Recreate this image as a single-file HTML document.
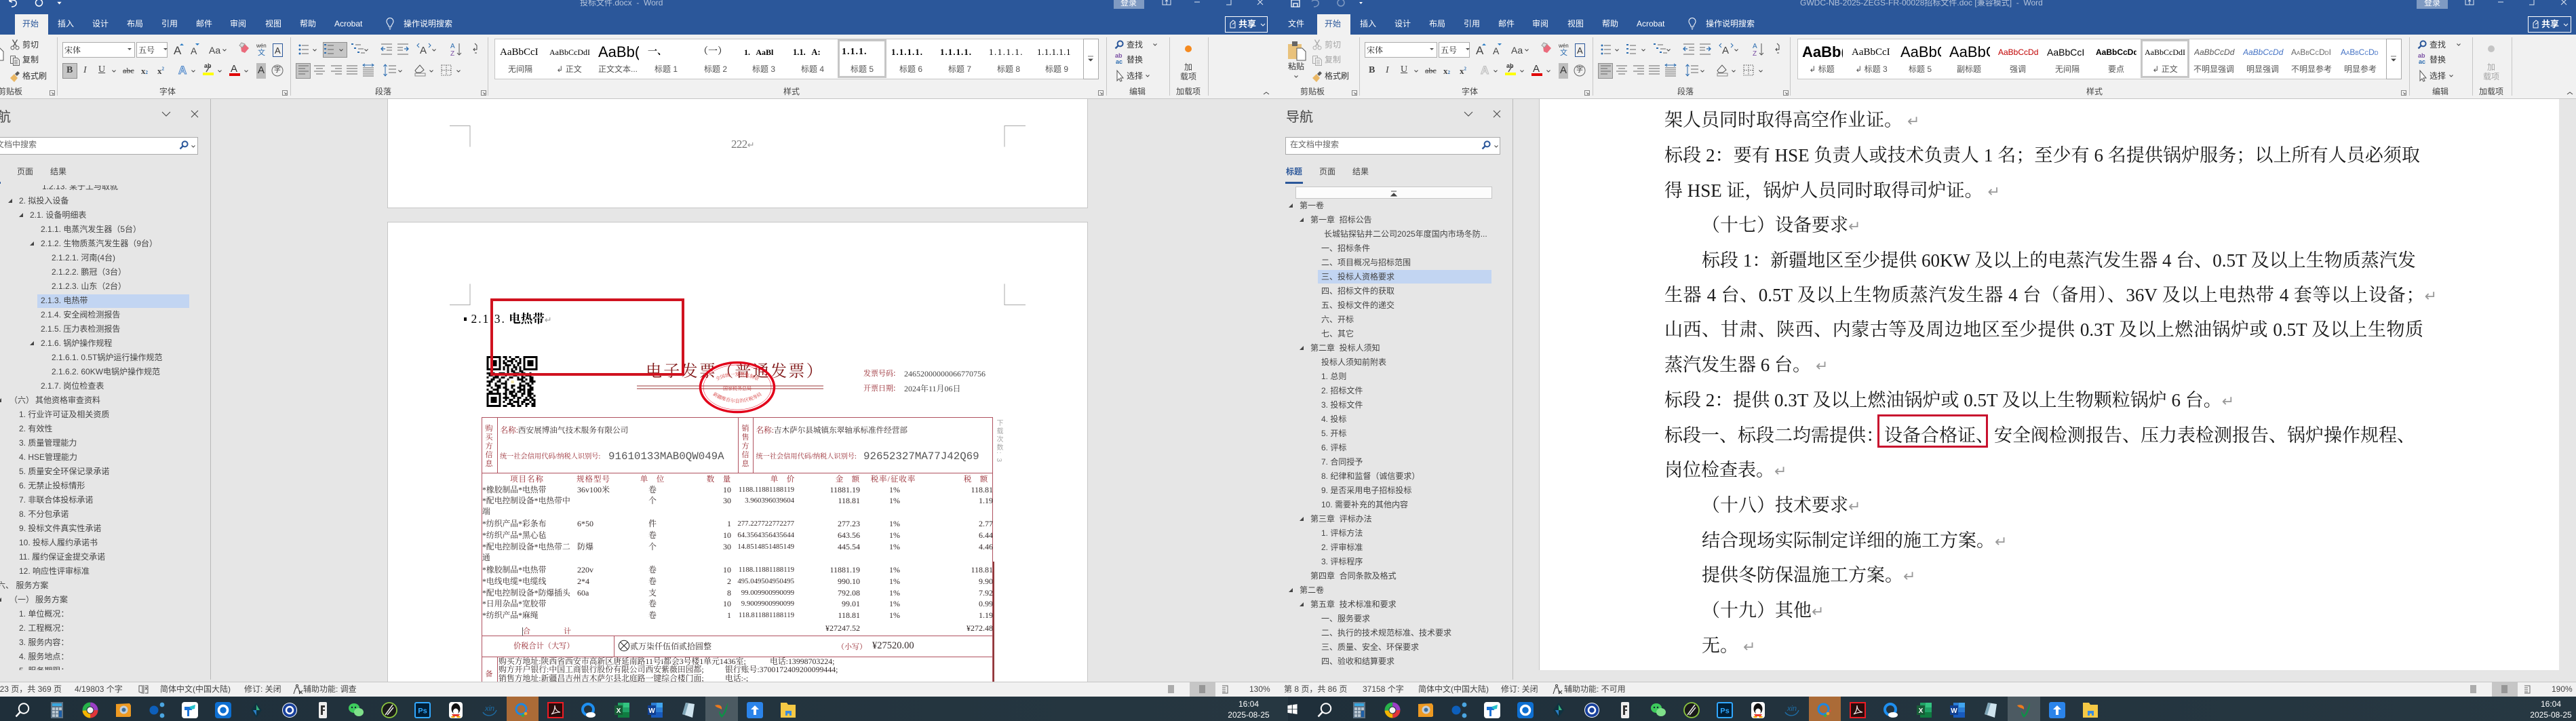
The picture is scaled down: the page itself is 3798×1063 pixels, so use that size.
<!DOCTYPE html>
<html lang="zh"><head><meta charset="utf-8"><title>Word</title>
<style>
html,body{margin:0;padding:0}
body{width:3798px;height:1063px;overflow:hidden;position:relative;background:#e6e6e6;font-family:"Liberation Sans","Noto Sans CJK SC",sans-serif;font-size:12px;color:#444}
.a{position:absolute;white-space:nowrap;line-height:1}
.b{position:absolute;box-sizing:border-box}
.s{font-family:"Liberation Serif","Noto Serif CJK SC",serif}
.r{transform:translateX(-100%)}
.c{transform:translateX(-50%)}
.w{color:#fff}
.g{color:#a5a5a5}
.tb{top:29px;color:#fff}
.hd{top:-2px;color:#b4c3da}
.lb{top:129px;color:#444}
.sep{position:absolute;top:55px;height:86px;width:1px;background:#c6c6c6}
.act{position:absolute;background:#c6c6c6;border:1px solid #8f8f8f;box-sizing:border-box}
.gal{position:absolute;top:57px;height:60px;background:#fff;border:1px solid #c6c6c6;box-sizing:border-box}
.gs{position:absolute;top:58px;width:72px;height:57px;border:3px solid #c6c6c6;box-sizing:border-box;background:#fff}
.gb{position:absolute;top:57px;height:60px;width:23px;background:#fff;border:1px solid #aaa;box-sizing:border-box}
.pv{position:absolute;top:64px;height:26px;width:60px;overflow:hidden;line-height:26px;white-space:nowrap;color:#000}
.sl{position:absolute;top:96px;transform:translateX(-50%);white-space:nowrap;line-height:1;color:#555}
.nl{position:absolute;top:273px;height:715px;overflow:hidden;width:300px}
.n2{top:293px;height:695px;width:300px}
.nr{position:relative;height:21px;line-height:21px;white-space:nowrap;color:#444}
.nr i{position:absolute;top:7px;width:0;height:0;border-left:6px solid transparent;border-bottom:6px solid #444}
.hl{position:absolute;height:20px;background:#c2d5f2}
.sb{position:absolute;top:1005px;height:22px;left:0;width:3798px;background:#f1f1f1;border-top:1px solid #c6c6c6;box-sizing:border-box}
.st{top:1010px;color:#444}
.tk{position:absolute;top:1027px;left:0;width:3798px;height:36px;background:linear-gradient(90deg,#1f2f3a,#263741 50%,#1f2f3a 50%,#273842)}
.page{position:absolute;background:#fff;border:1px solid #c6c6c6;box-sizing:border-box}
.rd{color:#96262e}
.ir{position:absolute;left:0;width:1464px;height:12px;color:#332a2a;font-family:"Liberation Serif","Noto Serif CJK SC",serif;font-size:12px}
.ir i{position:absolute;top:0;font-style:normal;white-space:nowrap;line-height:12px}
.nm{left:711px;font-size:11.8px}.sp{left:851px}.un{left:962px;transform:translateX(-50%);font-size:11.8px}.qt{right:386px}.pr{right:293px;font-size:10.8px}.am{right:196px}.ra{left:1319px;transform:translateX(-50%)}.tx{right:0}
.ih{position:absolute;top:702px;color:#96262e;font-size:11.5px;line-height:1;white-space:nowrap;transform:translateX(-50%);font-family:"Liberation Serif","Noto Serif CJK SC",serif;letter-spacing:1px}
.v{position:absolute;left:715.5px;font-size:11px;line-height:1;color:#96262e;font-family:"Noto Serif CJK SC",serif}
.v2{left:1093.5px}
.inv{font-family:"Liberation Serif","Noto Serif CJK SC",serif;color:#332a2a;font-size:11.85px}
.ln{position:absolute;font-family:"Liberation Serif","Noto Serif CJK SC",serif;font-size:27px;line-height:27px;height:27px;white-space:nowrap;color:#1a1a1a}
.j{text-align:justify;text-align-last:justify}
.ln em{font-style:normal;font-family:"DejaVu Sans",sans-serif;font-size:22px;color:#999}
</style></head><body>

<!-- top bars -->
<div class="b" style="left:0;top:0;width:3798px;height:51px;background:#2b579a"></div>
<div class="b" style="left:0;top:51px;width:3798px;height:95px;background:#f1f1f1;border-bottom:1px solid #c6c6c6"></div>

<!-- Title texts -->
<div class="a hd" style="left:855px">投标文件.docx&nbsp; -&nbsp; Word</div>
<div class="a hd" style="left:2654px">GWDC-NB-2025-ZEGS-FR-00028招标文件.doc [兼容模式]&nbsp; -&nbsp; Word</div>
<div class="b" style="left:1642px;top:0;width:45px;height:13px;background:#7f9ac2"></div>
<div class="b" style="left:3563px;top:0;width:46px;height:13px;background:#7f9ac2"></div>
<div class="a" style="left:1652px;top:-2px;color:#fff">登录</div>
<div class="a" style="left:3574px;top:-2px;color:#fff">登录</div>

<!-- Tabs window 1 -->
<div class="b" style="left:22px;top:21px;width:49px;height:30px;background:#f1f1f1"></div>
<div class="a" style="left:33px;top:29px;color:#2b579a">开始</div>
<div class="a tb" style="left:85px">插入</div><div class="a tb" style="left:136px">设计</div><div class="a tb" style="left:187px">布局</div><div class="a tb" style="left:238px">引用</div><div class="a tb" style="left:289px">邮件</div><div class="a tb" style="left:339px">审阅</div><div class="a tb" style="left:391px">视图</div><div class="a tb" style="left:442px">帮助</div><div class="a tb" style="left:493px">Acrobat</div><div class="a tb" style="left:595px">操作说明搜索</div>
<!-- Tabs window 2 -->
<div class="a tb" style="left:1899px">文件</div>
<div class="b" style="left:1942px;top:21px;width:49px;height:30px;background:#f1f1f1"></div>
<div class="a" style="left:1953px;top:29px;color:#2b579a">开始</div>
<div class="a tb" style="left:2005px">插入</div><div class="a tb" style="left:2056px">设计</div><div class="a tb" style="left:2107px">布局</div><div class="a tb" style="left:2158px">引用</div><div class="a tb" style="left:2209px">邮件</div><div class="a tb" style="left:2259px">审阅</div><div class="a tb" style="left:2311px">视图</div><div class="a tb" style="left:2362px">帮助</div><div class="a tb" style="left:2413px">Acrobat</div><div class="a tb" style="left:2515px">操作说明搜索</div>
<!-- Share -->
<div class="b" style="left:1806px;top:24px;width:63px;height:24px;border:1px solid #fff"></div>
<div class="a" style="left:1826px;top:29px;color:#fff;font-weight:700;font-size:13px">共享</div>
<div class="b" style="left:3727px;top:24px;width:64px;height:24px;border:1px solid #fff"></div>
<div class="a" style="left:3747px;top:29px;color:#fff;font-weight:700;font-size:13px">共享</div>

<!-- Separators -->
<div class="sep" style="left:84px"></div><div class="sep" style="left:428px"></div><div class="sep" style="left:719px"></div><div class="sep" style="left:1631px"></div><div class="sep" style="left:1724px"></div><div class="sep" style="left:1781px"></div>
<div class="sep" style="left:2004px"></div><div class="sep" style="left:2348px"></div><div class="sep" style="left:2639px"></div><div class="sep" style="left:3552px"></div><div class="sep" style="left:3645px"></div><div class="sep" style="left:3703px"></div>

<!-- Clipboard text -->
<div class="a" style="left:33px;top:60px;color:#333">剪切</div><div class="a" style="left:33px;top:82px;color:#333">复制</div><div class="a" style="left:33px;top:106px;color:#333">格式刷</div>
<div class="a lb" style="left:-3px">剪贴板</div>
<div class="a g" style="left:1953px;top:60px">剪切</div><div class="a g" style="left:1953px;top:82px">复制</div><div class="a" style="left:1953px;top:106px;color:#333">格式刷</div>
<div class="a" style="left:1899px;top:92px;color:#333">粘贴</div>
<div class="a lb" style="left:1917px">剪贴板</div>

<!-- Font group w1 -->
<div class="b" style="left:92px;top:62px;width:107px;height:23px;background:#fff;border:1px solid #ababab"></div>
<div class="a" style="left:95px;top:68px;color:#222;font-family:'Noto Serif CJK SC',serif">宋体</div>
<div class="b" style="left:201px;top:62px;width:46px;height:23px;background:#fff;border:1px solid #ababab"></div>
<div class="a" style="left:204px;top:68px;color:#222;font-family:'Noto Serif CJK SC',serif">五号</div>
<div class="a lb" style="left:235px">字体</div>
<div class="a" style="left:256px;top:66px;font-size:17px;color:#444">A</div>
<div class="a" style="left:281px;top:68px;font-size:14px;color:#444">A</div>
<div class="a" style="left:308px;top:67px;font-size:14px;color:#444">Aa</div>
<div class="a" style="left:378px;top:64px;font-size:8px;color:#333">wén</div>
<div class="a" style="left:380px;top:73px;font-size:11px;color:#2b6cb0">文</div>
<div class="b" style="left:402px;top:64px;width:15px;height:20px;border:1px solid #2b579a"></div>
<div class="a" style="left:405px;top:68px;font-size:13px;color:#333">A</div>
<div class="act" style="left:92px;top:93px;width:22px;height:23px"></div>
<div class="a s" style="left:98px;top:97px;font-size:14px;font-weight:700;color:#444">B</div>
<div class="a s" style="left:123px;top:97px;font-size:14px;font-style:italic;color:#444">I</div>
<div class="a s" style="left:145px;top:96px;font-size:14px;text-decoration:underline;color:#444">U</div>
<div class="a s" style="left:181px;top:98px;font-size:12px;text-decoration:line-through;color:#444">abc</div>
<div class="a s" style="left:208px;top:98px;font-size:13px;font-weight:700;color:#444">x<span style="font-size:7px;color:#2b6cb0">2</span></div>
<div class="a s" style="left:232px;top:98px;font-size:13px;font-weight:700;color:#444">x<sup style="font-size:7px;color:#2b6cb0;line-height:0">2</sup></div>
<div class="a" style="left:263px;top:95px;font-size:17px;color:#dbe7f6;-webkit-text-stroke:1px #4f86c6;font-weight:700">A</div>
<div class="a" style="left:301px;top:93px;font-size:9px;color:#333;font-weight:700">ab</div>
<div class="a" style="left:340px;top:94px;font-size:15px;color:#333">A</div>
<div class="b" style="left:378px;top:93px;width:14px;height:23px;background:#bdbdbd"></div>
<div class="a" style="left:380px;top:96px;font-size:15px;color:#333">A</div>
<div class="a" style="left:404px;top:99px;font-size:10px;color:#333">字</div>
<!-- Font group w2 -->
<div class="b" style="left:2012px;top:62px;width:107px;height:23px;background:#fff;border:1px solid #ababab"></div>
<div class="a" style="left:2015px;top:68px;color:#222;font-family:'Noto Serif CJK SC',serif">宋体</div>
<div class="b" style="left:2121px;top:62px;width:46px;height:23px;background:#fff;border:1px solid #ababab"></div>
<div class="a" style="left:2124px;top:68px;color:#222;font-family:'Noto Serif CJK SC',serif">五号</div>
<div class="a lb" style="left:2155px">字体</div>
<div class="a" style="left:2176px;top:66px;font-size:17px;color:#444">A</div>
<div class="a" style="left:2201px;top:68px;font-size:14px;color:#444">A</div>
<div class="a" style="left:2228px;top:67px;font-size:14px;color:#444">Aa</div>
<div class="a" style="left:2298px;top:64px;font-size:8px;color:#333">wén</div>
<div class="a" style="left:2300px;top:73px;font-size:11px;color:#2b6cb0">文</div>
<div class="b" style="left:2322px;top:64px;width:15px;height:20px;border:1px solid #2b579a"></div>
<div class="a" style="left:2325px;top:68px;font-size:13px;color:#333">A</div>
<div class="a s" style="left:2018px;top:97px;font-size:14px;font-weight:700;color:#444">B</div>
<div class="a s" style="left:2043px;top:97px;font-size:14px;font-style:italic;color:#444">I</div>
<div class="a s" style="left:2065px;top:96px;font-size:14px;text-decoration:underline;color:#444">U</div>
<div class="a s" style="left:2101px;top:98px;font-size:12px;text-decoration:line-through;color:#444">abc</div>
<div class="a s" style="left:2128px;top:98px;font-size:13px;font-weight:700;color:#444">x<span style="font-size:7px;color:#2b6cb0">2</span></div>
<div class="a s" style="left:2152px;top:98px;font-size:13px;font-weight:700;color:#444">x<sup style="font-size:7px;color:#2b6cb0;line-height:0">2</sup></div>
<div class="a" style="left:2183px;top:95px;font-size:17px;color:#eee;-webkit-text-stroke:1px #bbb;font-weight:700">A</div>
<div class="a" style="left:2221px;top:93px;font-size:9px;color:#333;font-weight:700">ab</div>
<div class="a" style="left:2260px;top:94px;font-size:15px;color:#333">A</div>
<div class="b" style="left:2298px;top:93px;width:14px;height:23px;background:#bdbdbd"></div>
<div class="a" style="left:2300px;top:96px;font-size:15px;color:#333">A</div>
<div class="a" style="left:2324px;top:99px;font-size:10px;color:#333">字</div>

<!-- Paragraph -->
<div class="act" style="left:476px;top:62px;width:36px;height:23px"></div>
<div class="act" style="left:436px;top:93px;width:22px;height:23px"></div>
<div class="act" style="left:2356px;top:93px;width:22px;height:23px"></div>
<div class="a" style="left:619px;top:67px;font-size:15px;color:#444">A</div>
<div class="a" style="left:2539px;top:67px;font-size:15px;color:#444">A</div>
<div class="a" style="left:664px;top:64px;font-size:10px;color:#2b6cb0">A</div>
<div class="a" style="left:664px;top:75px;font-size:10px;color:#7a4ea3">Z</div>
<div class="a" style="left:2584px;top:64px;font-size:10px;color:#2b6cb0">A</div>
<div class="a" style="left:2584px;top:75px;font-size:10px;color:#7a4ea3">Z</div>
<div class="a lb" style="left:553px">段落</div>
<div class="a lb" style="left:2473px">段落</div>

<!-- Styles gallery w1 -->
<div class="gal" style="left:729px;width:869px"></div>
<div class="gs" style="left:1235px"></div>
<div class="gb" style="left:1597px"></div>
<div class="pv s" style="left:737px;font-size:15px">AaBbCcI</div>
<div class="pv s" style="left:810px;font-size:12px">AaBbCcDdI</div>
<div class="pv" style="left:882px;font-size:22px">AaBb(</div>
<div class="pv s" style="left:955px;font-size:14px;font-weight:700">一、</div>
<div class="pv s" style="left:1030px;font-size:14px">（一）</div>
<div class="pv s" style="left:1097px;font-size:12px;font-weight:700">1.&nbsp;&nbsp; AaBl</div>
<div class="pv s" style="left:1169px;font-size:12.5px;font-weight:700">1.1.&nbsp;&nbsp; A:</div>
<div class="pv s" style="left:1241px;font-size:14px;font-weight:700;letter-spacing:1px">1.1.1.</div>
<div class="pv s" style="left:1314px;font-size:13px;font-weight:700;letter-spacing:1px">1.1.1.1.</div>
<div class="pv s" style="left:1386px;font-size:13px;font-weight:700;letter-spacing:1px">1.1.1.1.</div>
<div class="pv s" style="left:1458px;font-size:13px;letter-spacing:1.5px">1.1.1.1.</div>
<div class="pv s" style="left:1529px;font-size:13px;letter-spacing:.5px">1.1.1.1.1</div>
<div class="sl" style="left:767px">无间隔</div><div class="sl" style="left:839px">↲ 正文</div><div class="sl" style="left:911px">正文文本...</div><div class="sl" style="left:982px">标题 1</div><div class="sl" style="left:1055px">标题 2</div><div class="sl" style="left:1126px">标题 3</div><div class="sl" style="left:1198px">标题 4</div><div class="sl" style="left:1271px">标题 5</div><div class="sl" style="left:1343px">标题 6</div><div class="sl" style="left:1415px">标题 7</div><div class="sl" style="left:1487px">标题 8</div><div class="sl" style="left:1558px">标题 9</div>
<div class="a lb" style="left:1155px">样式</div>
<!-- Styles gallery w2 -->
<div class="gal" style="left:2650px;width:869px"></div>
<div class="gs" style="left:3156px"></div>
<div class="gb" style="left:3518px"></div>
<div class="pv" style="left:2657px;font-size:22px;font-weight:700">AaBb(</div>
<div class="pv s" style="left:2730px;font-size:15px">AaBbCcI</div>
<div class="pv" style="left:2802px;font-size:22px">AaBbCc</div>
<div class="pv" style="left:2874px;font-size:22px">AaBbC</div>
<div class="pv" style="left:2946px;font-size:12px;color:#c00000">AaBbCcDd</div>
<div class="pv" style="left:3018px;font-size:14px">AaBbCcI</div>
<div class="pv" style="left:3090px;font-size:12px;font-weight:700">AaBbCcDd</div>
<div class="pv s" style="left:3162px;font-size:12px">AaBbCcDdI</div>
<div class="pv" style="left:3235px;font-size:12px;font-style:italic;color:#555">AaBbCcDd</div>
<div class="pv" style="left:3307px;font-size:12px;font-style:italic;color:#4472c4">AaBbCcDd</div>
<div class="pv" style="left:3378px;font-size:12px;font-variant:small-caps;color:#666">AaBbCcDdI</div>
<div class="pv" style="left:3451px;font-size:12px;font-variant:small-caps;color:#4472c4">AaBbCcDd</div>
<div class="sl" style="left:2686px">↲ 标题</div><div class="sl" style="left:2759px">↲ 标题 3</div><div class="sl" style="left:2831px">标题 5</div><div class="sl" style="left:2903px">副标题</div><div class="sl" style="left:2975px">强调</div><div class="sl" style="left:3048px">无间隔</div><div class="sl" style="left:3120px">要点</div><div class="sl" style="left:3192px">↲ 正文</div><div class="sl" style="left:3264px">不明显强调</div><div class="sl" style="left:3336px">明显强调</div><div class="sl" style="left:3408px">不明显参考</div><div class="sl" style="left:3480px">明显参考</div>
<div class="a lb" style="left:3076px">样式</div>

<!-- Edit & add-in -->
<div class="a" style="left:1661px;top:60px;color:#333">查找</div><div class="a" style="left:1661px;top:82px;color:#333">替换</div><div class="a" style="left:1661px;top:106px;color:#333">选择</div>
<div class="a" style="left:1644px;top:78px;font-size:9px;color:#7a4ea3;font-weight:700">ab</div><div class="a" style="left:1645px;top:87px;font-size:9px;color:#2b6cb0;font-weight:700">ac</div>
<div class="a lb" style="left:1665px">编辑</div>
<div class="a" style="left:1746px;top:93px;color:#444">加</div><div class="a" style="left:1740px;top:107px;color:#444">载项</div><div class="a lb" style="left:1734px">加载项</div>
<div class="a" style="left:3582px;top:60px;color:#333">查找</div><div class="a" style="left:3582px;top:82px;color:#333">替换</div><div class="a" style="left:3582px;top:106px;color:#333">选择</div>
<div class="a" style="left:3565px;top:78px;font-size:9px;color:#7a4ea3;font-weight:700">ab</div><div class="a" style="left:3566px;top:87px;font-size:9px;color:#2b6cb0;font-weight:700">ac</div>
<div class="a lb" style="left:3586px">编辑</div>
<div class="a g" style="left:3667px;top:93px">加</div><div class="a g" style="left:3661px;top:107px">载项</div><div class="a lb" style="left:3655px">加载项</div>

<!-- Dividers in doc -->
<div class="b" style="left:310px;top:146px;width:1px;height:856px;background:#b9b9b9"></div>
<div class="b" style="left:2230px;top:146px;width:1px;height:856px;background:#b9b9b9"></div>

<!-- Nav w1 -->
<div class="a" style="left:-24px;top:163px;font-size:20px;color:#444">导航</div>
<div class="b" style="left:-30px;top:202px;width:322px;height:26px;background:#fff;border:1px solid #aaa"></div>
<div class="a" style="left:-18px;top:207px;color:#666">在文档中搜索</div>
<div class="a" style="left:25px;top:247px;color:#444">页面</div><div class="a" style="left:74px;top:247px;color:#444">结果</div>
<div class="b" style="left:0;top:268px;width:1px;height:3px;background:#2b579a"></div>
<div class="hl" style="left:55px;top:434px;width:224px"></div>
<div class="nl" style="left:0"><div style="margin-top:-8px">
<div class="nr" style="padding-left:62px">1.2.13. 某于工与取就</div>
<div class="nr" style="padding-left:28px"><i style="left:12px"></i>2. 拟投入设备</div>
<div class="nr" style="padding-left:44px"><i style="left:28px"></i>2.1. 设备明细表</div>
<div class="nr" style="padding-left:60px">2.1.1. 电蒸汽发生器（5台）</div>
<div class="nr" style="padding-left:60px"><i style="left:44px"></i>2.1.2. 生物质蒸汽发生器（9台）</div>
<div class="nr" style="padding-left:76px">2.1.2.1. 河南(4台)</div>
<div class="nr" style="padding-left:76px">2.1.2.2. 鹏冠（3台）</div>
<div class="nr" style="padding-left:76px">2.1.2.3. 山东（2台）</div>
<div class="nr" style="padding-left:60px">2.1.3. 电热带</div>
<div class="nr" style="padding-left:60px">2.1.4. 安全阀检测报告</div>
<div class="nr" style="padding-left:60px">2.1.5. 压力表检测报告</div>
<div class="nr" style="padding-left:60px"><i style="left:44px"></i>2.1.6. 锅炉操作规程</div>
<div class="nr" style="padding-left:76px">2.1.6.1. 0.5T锅炉运行操作规范</div>
<div class="nr" style="padding-left:76px">2.1.6.2. 60KW电锅炉操作规范</div>
<div class="nr" style="padding-left:60px">2.1.7. 岗位检查表</div>
<div class="nr" style="padding-left:14px"><i style="left:-4px"></i>（六）<span style="margin-left:2px">其他资格审查资料</span></div>
<div class="nr" style="padding-left:28px">1. 行业许可证及相关资质</div>
<div class="nr" style="padding-left:28px">2. 有效性</div>
<div class="nr" style="padding-left:28px">3. 质量管理能力</div>
<div class="nr" style="padding-left:28px">4. HSE管理能力</div>
<div class="nr" style="padding-left:28px">5. 质量安全环保记录承诺</div>
<div class="nr" style="padding-left:28px">6. 无禁止投标情形</div>
<div class="nr" style="padding-left:28px">7. 非联合体投标承诺</div>
<div class="nr" style="padding-left:28px">8. 不分包承诺</div>
<div class="nr" style="padding-left:28px">9. 投标文件真实性承诺</div>
<div class="nr" style="padding-left:28px">10. 投标人履约承诺书</div>
<div class="nr" style="padding-left:28px">11. 履约保证金提交承诺</div>
<div class="nr" style="padding-left:28px">12. 响应性评审标准</div>
<div class="nr" style="margin-left:-4px">六、&nbsp;服务方案</div>
<div class="nr" style="padding-left:14px"><i style="left:-4px"></i>（一）<span style="margin-left:2px">服务方案</span></div>
<div class="nr" style="padding-left:28px">1. 单位概况：</div>
<div class="nr" style="padding-left:28px">2. 工程概况：</div>
<div class="nr" style="padding-left:28px">3. 服务内容：</div>
<div class="nr" style="padding-left:28px">4. 服务地点：</div>
<div class="nr" style="padding-left:28px">5. 服务期限：</div>
</div></div>

<!-- Nav w2 -->
<div class="a" style="left:1896px;top:163px;font-size:20px;color:#444">导航</div>
<div class="b" style="left:1895px;top:202px;width:317px;height:26px;background:#fff;border:1px solid #aaa"></div>
<div class="a" style="left:1902px;top:207px;color:#666">在文档中搜索</div>
<div class="a" style="left:1896px;top:247px;color:#2b579a;font-weight:700">标题</div><div class="a" style="left:1945px;top:247px;color:#444">页面</div><div class="a" style="left:1994px;top:247px;color:#444">结果</div>
<div class="b" style="left:1895px;top:268px;width:26px;height:3px;background:#2b579a"></div>
<div class="b" style="left:1910px;top:275px;width:290px;height:18px;background:#fcfcfc;border:1px solid #c6c6c6"></div>
<div class="hl" style="left:1943px;top:398px;width:256px"></div>
<div class="nl n2" style="left:1900px"><div style="margin-top:-0.5px">
<div class="nr" style="padding-left:16px"><i style="left:0"></i>第一卷</div>
<div class="nr" style="padding-left:32px"><i style="left:16px"></i>第一章&nbsp;&nbsp;招标公告</div>
<div class="nr" style="padding-left:52px">长城钻探钻井二公司2025年度国内市场冬防...</div>
<div class="nr" style="padding-left:48px">一、招标条件</div>
<div class="nr" style="padding-left:48px">二、项目概况与招标范围</div>
<div class="nr" style="padding-left:48px">三、投标人资格要求</div>
<div class="nr" style="padding-left:48px">四、招标文件的获取</div>
<div class="nr" style="padding-left:48px">五、投标文件的递交</div>
<div class="nr" style="padding-left:48px">六、开标</div>
<div class="nr" style="padding-left:48px">七、其它</div>
<div class="nr" style="padding-left:32px"><i style="left:16px"></i>第二章&nbsp;&nbsp;投标人须知</div>
<div class="nr" style="padding-left:48px">投标人须知前附表</div>
<div class="nr" style="padding-left:48px">1. 总则</div>
<div class="nr" style="padding-left:48px">2. 招标文件</div>
<div class="nr" style="padding-left:48px">3. 投标文件</div>
<div class="nr" style="padding-left:48px">4. 投标</div>
<div class="nr" style="padding-left:48px">5. 开标</div>
<div class="nr" style="padding-left:48px">6. 评标</div>
<div class="nr" style="padding-left:48px">7. 合同授予</div>
<div class="nr" style="padding-left:48px">8. 纪律和监督（诚信要求）</div>
<div class="nr" style="padding-left:48px">9. 是否采用电子招标投标</div>
<div class="nr" style="padding-left:48px">10. 需要补充的其他内容</div>
<div class="nr" style="padding-left:32px"><i style="left:16px"></i>第三章&nbsp;&nbsp;评标办法</div>
<div class="nr" style="padding-left:48px">1. 评标方法</div>
<div class="nr" style="padding-left:48px">2. 评审标准</div>
<div class="nr" style="padding-left:48px">3. 评标程序</div>
<div class="nr" style="padding-left:32px">第四章&nbsp;&nbsp;合同条款及格式</div>
<div class="nr" style="padding-left:16px"><i style="left:0"></i>第二卷</div>
<div class="nr" style="padding-left:32px"><i style="left:16px"></i>第五章&nbsp;&nbsp;技术标准和要求</div>
<div class="nr" style="padding-left:48px">一、服务要求</div>
<div class="nr" style="padding-left:48px">二、执行的技术规范标准、技术要求</div>
<div class="nr" style="padding-left:48px">三、质量、安全、环保要求</div>
<div class="nr" style="padding-left:48px">四、验收和结算要求</div>
</div></div>

<!-- Left document pages -->
<div class="page" style="left:571px;top:146px;width:1033px;height:161px;border-top:0"></div>
<div class="page" style="left:571px;top:327px;width:1033px;height:680px"></div>
<div class="a s" style="left:1078px;top:204px;font-size:17px;color:#777;letter-spacing:-.6px">222<span style="font-family:'DejaVu Sans';font-size:13px;color:#999;letter-spacing:0">↵</span></div>

<!-- Heading + invoice -->
<div class="b" style="left:684px;top:468px;width:4px;height:5px;background:#000"></div>
<div class="a" style="left:694.5px;top:462px;font-size:17.5px;font-weight:700;color:#000;font-family:'Liberation Serif','Noto Serif CJK SC',serif"><span style="letter-spacing:2px;font-weight:400">2.1.3.</span> 电热带<span style="font-family:'DejaVu Sans';font-size:13px;color:#999;font-weight:400">↵</span></div>

<div class="a" style="left:952px;top:533px;font-size:24px;letter-spacing:2.3px;color:#7f1616;font-family:'Noto Serif CJK SC',serif">电子发票（普通发票）</div>
<div class="a rd" style="left:1273px;top:545px;font-size:11px;font-family:'Noto Serif CJK SC',serif">发票号码:</div>
<div class="a s" style="left:1333px;top:545px;font-size:12px;color:#444">24652000000066770756</div>
<div class="a rd" style="left:1273px;top:567px;font-size:11px;font-family:'Noto Serif CJK SC',serif">开票日期:</div>
<div class="a s" style="left:1333px;top:567px;font-size:12px;color:#444">2024年11月06日</div>

<div class="b" style="left:710px;top:615px;width:754px;height:392px;border:1px solid #b0525f;border-bottom:0"></div>
<div class="b" style="left:710px;top:697px;width:754px;height:1px;background:#b0525f"></div>
<div class="b" style="left:710px;top:937px;width:754px;height:1px;background:#b0525f"></div>
<div class="b" style="left:710px;top:968px;width:754px;height:1px;background:#b0525f"></div>
<div class="b" style="left:733px;top:615px;width:1px;height:82px;background:#b0525f"></div>
<div class="b" style="left:1088px;top:615px;width:1px;height:82px;background:#b0525f"></div>
<div class="b" style="left:1110px;top:615px;width:1px;height:82px;background:#b0525f"></div>
<div class="b" style="left:905px;top:937px;width:1px;height:31px;background:#b0525f"></div>
<div class="b" style="left:733px;top:968px;width:1px;height:37px;background:#b0525f"></div>
<div class="b" style="left:1464px;top:828px;width:2px;height:177px;background:#8f3a3a"></div>
<div class="b" style="left:770px;top:925px;width:1px;height:12px;background:#555"></div>

<div class="v" style="top:626px">购</div><div class="v" style="top:639px">买</div><div class="v" style="top:652px">方</div><div class="v" style="top:665px">信</div><div class="v" style="top:678px">息</div>
<div class="v v2" style="top:626px">销</div><div class="v v2" style="top:639px">售</div><div class="v v2" style="top:652px">方</div><div class="v v2" style="top:665px">信</div><div class="v v2" style="top:678px">息</div>

<div class="a" style="left:737.5px;top:629px;font-size:11.6px;font-family:'Liberation Serif','Noto Serif CJK SC',serif;color:#332a2a"><span class="rd">名称:</span>西安展博油气技术服务有限公司</div>
<div class="a" style="left:1114.5px;top:629px;font-size:11.6px;font-family:'Liberation Serif','Noto Serif CJK SC',serif;color:#332a2a"><span class="rd">名称:</span>吉木萨尔县城镇东翠轴承标准件经营部</div>
<div class="a rd" style="left:737px;top:669px;font-size:10.2px;font-family:'Liberation Serif','Noto Serif CJK SC',serif">统一社会信用代码/纳税人识别号:</div>
<div class="a rd" style="left:1114.5px;top:669px;font-size:10.2px;font-family:'Liberation Serif','Noto Serif CJK SC',serif">统一社会信用代码/纳税人识别号:</div>
<div class="a" style="left:897px;top:666px;font-size:15.8px;font-family:'Liberation Mono',monospace;color:#555">91610133MAB0QW049A</div>
<div class="a" style="left:1273px;top:666px;font-size:15.8px;font-family:'Liberation Mono',monospace;color:#555">92652327MA77J42Q69</div>

<div class="ih" style="left:777px">项目名称</div><div class="ih" style="left:875px">规格型号</div><div class="ih" style="left:962px">单&nbsp;&nbsp;&nbsp;位</div><div class="ih" style="left:1060px">数&nbsp;&nbsp;&nbsp;量</div><div class="ih" style="left:1154px">单&nbsp;&nbsp;&nbsp;价</div><div class="ih" style="left:1250px">金&nbsp;&nbsp;&nbsp;额</div><div class="ih" style="left:1317px">税率/征收率</div><div class="ih" style="left:1439px">税&nbsp;&nbsp;&nbsp;额</div>

<div class="ir" style="top:716px"><i class="nm">*橡胶制品*电热带</i><i class="sp">36v100米</i><i class="un">卷</i><i class="qt">10</i><i class="pr">1188.11881188119</i><i class="am">11881.19</i><i class="ra">1%</i><i class="tx">118.81</i></div>
<div class="ir" style="top:732px"><i class="nm">*配电控制设备*电热带中</i><i class="un">个</i><i class="qt">30</i><i class="pr">3.960396039604</i><i class="am">118.81</i><i class="ra">1%</i><i class="tx">1.19</i></div>
<div class="ir" style="top:748px"><i class="nm">端</i></div>
<div class="ir" style="top:766px"><i class="nm">*纺织产品*彩条布</i><i class="sp">6*50</i><i class="un">件</i><i class="qt">1</i><i class="pr">277.227722772277</i><i class="am">277.23</i><i class="ra">1%</i><i class="tx">2.77</i></div>
<div class="ir" style="top:783px"><i class="nm">*纺织产品*黑心毡</i><i class="un">卷</i><i class="qt">10</i><i class="pr">64.3564356435644</i><i class="am">643.56</i><i class="ra">1%</i><i class="tx">6.44</i></div>
<div class="ir" style="top:800px"><i class="nm">*配电控制设备*电热带二</i><i class="sp">防爆</i><i class="un">个</i><i class="qt">30</i><i class="pr">14.8514851485149</i><i class="am">445.54</i><i class="ra">1%</i><i class="tx">4.46</i></div>
<div class="ir" style="top:816px"><i class="nm">通</i></div>
<div class="ir" style="top:834px"><i class="nm">*橡胶制品*电热带</i><i class="sp">220v</i><i class="un">卷</i><i class="qt">10</i><i class="pr">1188.11881188119</i><i class="am">11881.19</i><i class="ra">1%</i><i class="tx">118.81</i></div>
<div class="ir" style="top:851px"><i class="nm">*电线电缆*电缆线</i><i class="sp">2*4</i><i class="un">卷</i><i class="qt">2</i><i class="pr">495.049504950495</i><i class="am">990.10</i><i class="ra">1%</i><i class="tx">9.90</i></div>
<div class="ir" style="top:868px"><i class="nm">*配电控制设备*防爆插头</i><i class="sp">60a</i><i class="un">支</i><i class="qt">8</i><i class="pr">99.009900990099</i><i class="am">792.08</i><i class="ra">1%</i><i class="tx">7.92</i></div>
<div class="ir" style="top:884px"><i class="nm">*日用杂品*宽胶带</i><i class="un">卷</i><i class="qt">10</i><i class="pr">9.9009900990099</i><i class="am">99.01</i><i class="ra">1%</i><i class="tx">0.99</i></div>
<div class="ir" style="top:901px"><i class="nm">*纺织产品*麻绳</i><i class="un">卷</i><i class="qt">1</i><i class="pr">118.811881188119</i><i class="am">118.81</i><i class="ra">1%</i><i class="tx">1.19</i></div>
<div class="ir" style="top:920px"><i class="am">¥27247.52</i><i class="tx">¥272.48</i></div>
<div class="a rd" style="left:771px;top:925px;font-size:11px;font-family:'Noto Serif CJK SC',serif">合</div>
<div class="a rd" style="left:831px;top:925px;font-size:11px;font-family:'Noto Serif CJK SC',serif">计</div>
<div class="a rd" style="left:757px;top:947px;font-size:11.2px;font-family:'Noto Serif CJK SC',serif">价税合计（大写）</div>
<div class="a inv" style="left:929px;top:947px;font-size:12px">贰万柒仟伍佰贰拾圆整</div>
<div class="a rd" style="left:1234px;top:948px;font-size:11px;font-family:'Noto Serif CJK SC',serif">（小写）</div>
<div class="a s" style="left:1286px;top:945px;font-size:14.5px;color:#332a2a">¥27520.00</div>
<div class="v" style="top:988px">备</div>
<div class="a inv" style="left:735px;top:970px">购买方地址:陕西省西安市高新区唐延南路11号i都会3号楼1单元1436室;</div>
<div class="a inv" style="left:1135px;top:970px">电话:13998703224;</div>
<div class="a inv" style="left:735px;top:982px">购方开户银行:中国工商银行股份有限公司西安紫薇田园都;</div>
<div class="a inv" style="left:1069px;top:982px">银行账号:3700172409200099444;</div>
<div class="b" style="left:735px;top:994px;width:500px;height:11px;overflow:hidden"><div class="a inv" style="left:0;top:1px">销售方地址:新疆昌吉州吉木萨尔县北庭路一键综合楼门面;</div><div class="a inv" style="left:334px;top:1px">电话:-;</div></div>
<div class="a" style="left:1467px;top:618px;font-size:10px;color:#a8a8a8;writing-mode:vertical-rl;letter-spacing:2px">下载次数: 3</div>

<!-- Right document page -->
<div class="b" style="left:2269px;top:146px;width:1504px;height:842px;background:#fff;border-left:1px solid #c6c6c6"></div>
<div class="ln" style="left:2454px;top:164px">架人员同时取得高空作业证。<em>&nbsp;↵</em></div>
<div class="ln j" style="left:2454px;top:216px;width:1114px">标段 2：要有 HSE 负责人或技术负责人 1 名；至少有 6 名提供锅炉服务；以上所有人员必须取</div>
<div class="ln" style="left:2454px;top:268px">得 HSE 证，锅炉人员同时取得司炉证。<em>&nbsp;↵</em></div>
<div class="ln" style="left:2509px;top:319px">（十七）设备要求<em>↵</em></div>
<div class="ln j" style="left:2509px;top:371px;width:1052px">标段 1：新疆地区至少提供 60KW 及以上的电蒸汽发生器 4 台、0.5T 及以上生物质蒸汽发</div>
<div class="ln j" style="left:2454px;top:422px;width:1139px">生器 4 台、0.5T 及以上生物质蒸汽发生器 4 台（备用）、36V 及以上电热带 4 套等以上设备；<em>↵</em></div>
<div class="ln j" style="left:2454px;top:473px;width:1119px">山西、甘肃、陕西、内蒙古等及周边地区至少提供 0.3T 及以上燃油锅炉或 0.5T 及以上生物质</div>
<div class="ln" style="left:2454px;top:525px">蒸汽发生器 6 台。<em>&nbsp;↵</em></div>
<div class="ln" style="left:2454px;top:577px">标段 2：提供 0.3T 及以上燃油锅炉或 0.5T 及以上生物颗粒锅炉 6 台。<em>↵</em></div>
<div class="ln j" style="left:2454px;top:629px;width:1106px">标段一、标段二均需提供：设备合格证、安全阀检测报告、压力表检测报告、锅炉操作规程、</div>
<div class="ln" style="left:2454px;top:680px">岗位检查表。<em>↵</em></div>
<div class="ln" style="left:2509px;top:732px">（十八）技术要求<em>↵</em></div>
<div class="ln" style="left:2509px;top:784px">结合现场实际制定详细的施工方案。<em>↵</em></div>
<div class="ln" style="left:2509px;top:835px">提供冬防保温施工方案。<em>↵</em></div>
<div class="ln" style="left:2509px;top:887px">（十九）其他<em>↵</em></div>
<div class="ln" style="left:2509px;top:939px">无。<em>&nbsp;↵</em></div>
<div class="b" style="left:2768px;top:611px;width:163px;height:49px;border:3px solid #c8102e"></div>

<!-- Status bar -->
<div class="sb"></div>
<div class="a st r" style="left:91px">第 223 页，共 369 页</div>
<div class="a st" style="left:110px">4/19803 个字</div>
<div class="a st" style="left:236px">简体中文(中国大陆)</div>
<div class="a st" style="left:360px">修订: 关闭</div>
<div class="a st" style="left:447px">辅助功能: 调查</div>
<div class="b" style="left:1754px;top:1006px;width:38px;height:21px;background:#c6c6c6"></div>
<div class="a st" style="left:1842px">130%</div>
<div class="a st" style="left:1893px">第 8 页，共 86 页</div>
<div class="a st" style="left:2009px">37158 个字</div>
<div class="a st" style="left:2091px">简体中文(中国大陆)</div>
<div class="a st" style="left:2213px">修订: 关闭</div>
<div class="a st" style="left:2306px">辅助功能: 不可用</div>
<div class="b" style="left:3674px;top:1006px;width:38px;height:21px;background:#c6c6c6"></div>
<div class="a st" style="left:3762px">190%</div>

<!-- Taskbar -->
<div class="tk"></div>
<div class="b" style="left:747px;top:1027px;width:47px;height:36px;background:#ab6b37"></div>
<div class="b" style="left:1040px;top:1027px;width:48px;height:36px;background:#4c5a62"></div>
<div class="b" style="left:2667px;top:1027px;width:47px;height:36px;background:#ab6b37"></div>
<div class="b" style="left:2960px;top:1027px;width:48px;height:36px;background:#4c5a62"></div>
<div class="a c w" style="left:1841px;top:1032px">16:04</div>
<div class="a c w" style="left:1841px;top:1048px">2025-08-25</div>
<div class="a c w" style="left:3761px;top:1032px">16:04</div>
<div class="a c w" style="left:3761px;top:1048px">2025-08-25</div>

<!-- SVG overlay -->
<svg width="3798" height="1063" viewBox="0 0 3798 1063" style="position:absolute;left:0;top:0" xmlns="http://www.w3.org/2000/svg">
<defs>
<symbol id="dn" viewBox="0 0 6 4"><path d="M.5.5 3 3 5.5.5" fill="none" stroke="#444"/></symbol>
<symbol id="lc" viewBox="0 0 8 8"><path d="M.5 7.5v-7h7v7zM3 3l3 3M6 4v2H4" fill="none" stroke="#666" stroke-width=".8"/></symbol>
<symbol id="mg" viewBox="0 0 14 14"><circle cx="8.6" cy="5.4" r="4" fill="none" stroke="#2b579a" stroke-width="2"/><path d="M5.8 8.2 1.5 12.5" stroke="#2b579a" stroke-width="2.4"/></symbol>
<symbol id="bulb" viewBox="0 0 12 18"><path d="M4 13C4 10 1 9 1 5.5a5 5 0 0 1 10 0C11 9 8 10 8 13zM4.5 15h3M5 17h2" fill="none" stroke="#fff"/></symbol>
<symbol id="cut" viewBox="0 0 14 16"><circle cx="3.5" cy="12.5" r="2.5" fill="none" stroke="currentColor"/><circle cx="10.5" cy="12.5" r="2.5" fill="none" stroke="currentColor"/><path d="M4.5 10.500 10.500.5M9.500 10.500 3.500.5" fill="none" stroke="currentColor" stroke-width="1.3"/></symbol>
<symbol id="cpy" viewBox="0 0 14 16"><path d="M.5 1.500h7v3M.5 1.500v11h3.500M4.500 4.500h6l3 3v8h-9zM6 8h5M6 10.500h5M6 13h5" fill="none" stroke="currentColor"/></symbol>
<symbol id="brs" viewBox="0 0 16 18"><path d="M1 11l6-6 5 6-5 6z" fill="#eab764"/><path d="M8 5l4-4 3 3-4 4z" fill="#5a5a5a"/></symbol>
<symbol id="paste" viewBox="0 0 28 30"><rect x="1" y="5" width="20" height="22" fill="#e9c27c"/><rect x="7" y="1" width="8" height="7" fill="#666"/><path d="M14 11h8l5 5v13H14z" fill="#fff" stroke="#555"/></symbol>
<symbol id="win" viewBox="0 0 24 24"><path d="M2 4.500 11 3v8.500H2zM12.500 3 22 1.500v10h-9.500zM2 12.500h9V21l-9-1.500zM12.500 12.500H22v10L12.500 21z" fill="#fff"/></symbol>
<symbol id="srch" viewBox="0 0 24 24"><circle cx="14" cy="9.500" r="7.200" fill="none" stroke="#fff" stroke-width="2"/><path d="M9 14.500 2.500 21.500" stroke="#fff" stroke-width="2.400"/></symbol>
<symbol id="calc" viewBox="0 0 24 24"><rect x="3" y="0" width="18" height="24" fill="#5e7386"/><rect x="5" y="2" width="14" height="4" fill="#38a7e0"/><path d="M5 8h4v4H5zM10 8h4v4h-4zM15 8h4v4h-4zM5 13h4v4H5zM10 13h4v4h-4zM5 18h4v4H5zM10 18h4v4h-4z" fill="#b8c5d0"/><rect x="15" y="13" width="4" height="9" fill="#1d5fa8"/></symbol>
<symbol id="ring" viewBox="0 0 24 24"><circle cx="12" cy="12" r="8.500" fill="none" stroke="#e0353a" stroke-width="6" stroke-dasharray="13 41" /><circle cx="12" cy="12" r="8.500" fill="none" stroke="#f4b400" stroke-width="6" stroke-dasharray="13 41" stroke-dashoffset="-13"/><circle cx="12" cy="12" r="8.500" fill="none" stroke="#27b24a" stroke-width="6" stroke-dasharray="14 40" stroke-dashoffset="-26"/><circle cx="12" cy="12" r="8.500" fill="none" stroke="#9b3fc6" stroke-width="6" stroke-dasharray="14 40" stroke-dashoffset="-40"/><circle cx="12" cy="12" r="4.500" fill="#f4f4f4"/></symbol>
<symbol id="photo" viewBox="0 0 24 24"><path d="M1 3l20-1 2 3v16l-2 1H1z" fill="#ee9a22"/><circle cx="12.500" cy="11.500" r="6" fill="#c5cfd8"/><circle cx="12.500" cy="11.500" r="3" fill="#3c6f9f"/></symbol>
<symbol id="dots" viewBox="0 0 24 24"><circle cx="7" cy="12" r="6.500" fill="#0d5fbb"/><circle cx="19" cy="4" r="3.400" fill="#4ba5e0"/><circle cx="19" cy="20" r="3.400" fill="#4ba5e0"/></symbol>
<symbol id="tt" viewBox="0 0 24 24"><rect x="0" y="0" width="24" height="24" rx="4" fill="#fff"/><path d="M4 7h11v5h-4v9H8v-9H4z" fill="#1c73d8"/><path d="M11 7l9-3-1 6-5 1z" fill="#27c2cc"/></symbol>
<symbol id="bring" viewBox="0 0 24 24"><rect x="0" y="0" width="24" height="24" rx="4" fill="#0e6fd1"/><circle cx="12" cy="12" r="6.500" fill="none" stroke="#fff" stroke-width="3.500"/></symbol>
<symbol id="dark" viewBox="0 0 24 24"><path d="M12 1 20 12 12 23 4 12z" fill="#10313f"/><path d="M12 4l5 8H12z" fill="#36b37e"/><path d="M12 20l-5-8h5z" fill="#2a7ec7"/></symbol>
<symbol id="gc" viewBox="0 0 24 24"><circle cx="12" cy="12" r="11" fill="#fff"/><circle cx="12" cy="12" r="10" fill="#173f9b"/><circle cx="12" cy="12" r="5" fill="none" stroke="#fff" stroke-width="2.500"/></symbol>
<symbol id="ff" viewBox="0 0 24 24"><rect x="6" y="0" width="12" height="24" rx="2" fill="#eee"/><path d="M9 5h6v3h-3v3h3v2h-3v6H9z" fill="#333"/></symbol>
<symbol id="wx" viewBox="0 0 24 24"><ellipse cx="9" cy="9" rx="8" ry="7" fill="#3ecb5c"/><ellipse cx="16" cy="15" rx="7" ry="6" fill="#7fe08a"/><circle cx="6" cy="8" r="1.200" fill="#123"/><circle cx="11" cy="8" r="1.200" fill="#123"/></symbol>
<symbol id="pen" viewBox="0 0 24 24"><circle cx="12" cy="12" r="11" fill="#1a1a1a" stroke="#8cc63f" stroke-width="1.800"/><path d="M6 19 17 4M9 19 18 8" stroke="#e8e8e8" stroke-width="1.500"/></symbol>
<symbol id="ps" viewBox="0 0 24 24"><rect x="1" y="1" width="22" height="22" rx="2" fill="#001e36" stroke="#31a8ff" stroke-width="2"/><text x="12" y="16.500" text-anchor="middle" font-family="Liberation Sans" font-size="11" font-weight="700" fill="#31a8ff">Ps</text></symbol>
<symbol id="qq" viewBox="0 0 24 24"><rect x="2" y="0" width="20" height="24" rx="4" fill="#fff"/><ellipse cx="12" cy="10" rx="6.500" ry="8" fill="#111"/><ellipse cx="12" cy="14" rx="4" ry="4.500" fill="#fff"/><path d="M6 18h12l-2 3H8z" fill="#e8372d"/><ellipse cx="8" cy="22" rx="3" ry="1.200" fill="#f4a700"/><ellipse cx="16" cy="22" rx="3" ry="1.200" fill="#f4a700"/></symbol>
<symbol id="xin" viewBox="0 0 24 24"><text x="12" y="13" text-anchor="middle" font-family="Liberation Sans" font-size="11" font-style="italic" fill="#1d6ea8">xin</text><path d="M2 15c4 7 16 7 20-3" fill="none" stroke="#1d6ea8" stroke-width="1.300"/></symbol>
<symbol id="qw" viewBox="0 0 24 24"><circle cx="10.500" cy="10.500" r="7.500" fill="none" stroke="#1e87e0" stroke-width="3"/><circle cx="17" cy="17" r="2.300" fill="#f3a21c"/><circle cx="13" cy="20" r="2" fill="#36b24a"/><circle cx="20" cy="13" r="1.500" fill="#e0503a"/></symbol>
<symbol id="acro" viewBox="0 0 24 24"><rect x="1" y="1" width="22" height="22" fill="#2a0c0c" stroke="#ee1c25" stroke-width="2"/><path d="M6 18c4-3 5-8 5-13 0 5 3 9 8 10-5 0-9 1-13 3z" fill="none" stroke="#f3e5e5" stroke-width="1.200"/></symbol>
<symbol id="qc" viewBox="0 0 24 24"><circle cx="11" cy="11" r="8" fill="none" stroke="#1e8ff0" stroke-width="4"/><ellipse cx="15" cy="19" rx="7" ry="4" fill="#fff"/></symbol>
<symbol id="xl" viewBox="0 0 24 24"><rect x="6" y="1" width="17" height="22" fill="#21a366"/><rect x="14" y="1" width="9" height="7" fill="#33c481"/><rect x="6" y="15" width="17" height="8" fill="#107c41"/><rect x="1" y="5" width="12" height="14" fill="#185c37"/><text x="7" y="16" text-anchor="middle" font-family="Liberation Sans" font-size="10" font-weight="700" fill="#fff">X</text></symbol>
<symbol id="wd" viewBox="0 0 24 24"><rect x="6" y="1" width="17" height="22" fill="#2b7cd3"/><rect x="14" y="1" width="9" height="7" fill="#41a5ee"/><rect x="6" y="15" width="17" height="8" fill="#185abd"/><rect x="1" y="5" width="12" height="14" fill="#103f91"/><text x="7" y="16" text-anchor="middle" font-family="Liberation Sans" font-size="10" font-weight="700" fill="#fff">W</text></symbol>
<symbol id="np" viewBox="0 0 24 24"><path d="M8 1 21 3 18 23 3 18z" fill="#cfe4ee"/><path d="M8 1 3 18 7 19 12 2z" fill="#7fa6b8"/></symbol>
<symbol id="vv" viewBox="0 0 24 24"><path d="M2 5c6-2 11 0 10 6-4-3-7-2-10-6z" fill="#ee7a1c"/><path d="M21 1c0 8-3 17-9 22-3-3-4-6-4-10 2 3 3 5 5 6 3-5 5-11 8-18z" fill="#0f8f47"/></symbol>
<symbol id="bbx" viewBox="0 0 24 24"><rect x="0" y="0" width="24" height="24" rx="3" fill="#2b84ea"/><path d="M12 5l6 6h-4v8h-4v-8H6z" fill="#fff"/></symbol>
<symbol id="fd" viewBox="0 0 24 24"><path d="M1 1h9l2 3h11v19H1z" fill="#f5c945"/><rect x="8" y="13" width="9" height="7" fill="#3a8be0"/><rect x="11" y="17" width="3" height="3" fill="#f5c945"/></symbol>
<g id="tbar">
<use href="#srch" x="21" y="1035" width="24" height="24"/><use href="#calc" x="72" y="1035" width="24" height="24"/><use href="#ring" x="121" y="1035" width="24" height="24"/><use href="#photo" x="170" y="1035" width="24" height="24"/><use href="#dots" x="220" y="1035" width="24" height="24"/><use href="#tt" x="268" y="1035" width="24" height="24"/><use href="#bring" x="317" y="1035" width="24" height="24"/><use href="#dark" x="366" y="1035" width="24" height="24"/><use href="#gc" x="415" y="1035" width="24" height="24"/><use href="#ff" x="464" y="1035" width="24" height="24"/><use href="#wx" x="513" y="1035" width="24" height="24"/><use href="#pen" x="562" y="1035" width="24" height="24"/><use href="#ps" x="611" y="1035" width="24" height="24"/><use href="#qq" x="660" y="1035" width="24" height="24"/><use href="#xin" x="710" y="1035" width="24" height="24"/><use href="#qw" x="758" y="1035" width="24" height="24"/><use href="#acro" x="807" y="1035" width="24" height="24"/><use href="#qc" x="856" y="1035" width="24" height="24"/><use href="#xl" x="905" y="1035" width="24" height="24"/><use href="#wd" x="954" y="1035" width="24" height="24"/><use href="#np" x="1003" y="1035" width="24" height="24"/><use href="#vv" x="1052" y="1035" width="24" height="24"/><use href="#bbx" x="1101" y="1035" width="24" height="24"/><use href="#fd" x="1150" y="1035" width="24" height="24"/>
</g>
<g id="ric" fill="none">
<path d="M268 63l3 3h-6zM291 66l3-3h-6z" fill="#2b7cc4" transform="translate(0 1)"/>
<use href="#dn" x="328" y="72" width="6" height="4"/><use href="#dn" x="282" y="103" width="6" height="4" transform="translate(-117 0)"/>
<path d="M188 71h6l-3 3zM241 71h6l-3 3z" fill="#555"/>
<path d="M355 68l5-4 7 7-6 7-5-2z" fill="#ea6b7c"/><path d="M353 67l3-4 5 2-4 5z" fill="#ddd" stroke="#999"/>
<circle cx="409" cy="104" r="8" stroke="#666"/>
<rect x="299" y="107" width="16" height="4" fill="#ffff00"/><path d="M304 106l5-8" stroke="#555" stroke-width="1.500"/><rect x="338" y="108" width="16" height="4" fill="#e00000"/>
<use href="#dn" x="282" y="103" width="6" height="4"/><use href="#dn" x="321" y="103" width="6" height="4"/><use href="#dn" x="360" y="103" width="6" height="4"/>
<path d="M445 67h10M445 73h10M445 79h10M483 67h9M483 73h9M483 79h9M524 66h8M528 72h8M532 78h6" stroke="#666"/>
<circle cx="442" cy="67" r="1.500" fill="#2b6cb0"/><circle cx="442" cy="73" r="1.500" fill="#2b6cb0"/><circle cx="442" cy="79" r="1.500" fill="#2b6cb0"/>
<path d="M478 66h3M478 72h3M478 78h3M518 65h3M522 71h3M527 77h3" stroke="#2b6cb0" stroke-width="2"/>
<use href="#dn" x="461" y="72" width="6" height="4"/><use href="#dn" x="500" y="72" width="6" height="4"/><use href="#dn" x="537" y="72" width="6" height="4"/><use href="#dn" x="637" y="72" width="6" height="4"/>
<path d="M562 65h16M570 70h8M570 74h8M562 80h16M586 65h16M586 70h8M586 74h8M586 80h16" stroke="#666"/>
<path d="M568 72h-6m3-3-3 3 3 3M596 72h6m-3-3 3 3-3 3" stroke="#2b6cb0" stroke-width="1.300"/>
<path d="M618 64l-3 3 3 3M632 64l3 3-3 3" stroke="#2b6cb0"/>
<path d="M677 64v17m-3-3 3 3 3-3" stroke="#555"/>
<path d="M700 64l3 3v6h-5m2-2-2 2 2 2M700 78h3" stroke="#444"/>
<path d="M440 97h15M440 101h10M440 105h15M440 109h10M463 97h16M466 101h10M463 105h16M466 109h10M488 97h16M494 101h10M488 105h16M494 109h10M511 97h16M511 101h16M511 105h16M511 109h16M535 100h16M535 103h16M535 106h16M535 109h16M535 112h16" stroke="#666"/>
<path d="M535 96h16m-13-2-3 2 3 2m10-4 3 2-3 2" stroke="#2b6cb0"/>
<path d="M573 97h11M573 102h11M573 107h11" stroke="#666"/><path d="M568 95v17m-2.500-14 2.500-3 2.500 3m-5 11 2.500 3 2.500-3" stroke="#2b6cb0"/>
<use href="#dn" x="587" y="103" width="6" height="4"/><use href="#dn" x="633" y="103" width="6" height="4"/><use href="#dn" x="673" y="103" width="6" height="4"/>
<path d="M612 104l7-8 6 7-5 4h-6z" stroke="#555"/><rect x="612" y="108" width="15" height="4" stroke="#888"/>
<rect x="651" y="96" width="14" height="15" stroke="#555" stroke-dasharray="1.500 1.500"/><path d="M658 96v15M651 103.500h14" stroke="#555" stroke-dasharray="1.500 1.500"/>
<use href="#lc" x="73" y="133" width="8" height="8"/><use href="#lc" x="416" y="133" width="8" height="8"/><use href="#lc" x="709" y="133" width="8" height="8"/>
</g>
</defs>

<!-- Title bar icons w1 -->
<path d="M14 2c3-3 9-2 10 1 1 4-2 7-7 7M14 2v-2M14 2l4 1" fill="none" stroke="#fff" stroke-width="1.500"/>
<circle cx="57.500" cy="4" r="5" fill="none" stroke="#fff" stroke-width="1.500"/>
<path d="M85 -1h5M85 3h5l-2.500 3z" fill="#fff" stroke="#fff" stroke-width=".6"/>
<path d="M1714 -1v8h12v-8M1720 7v-7m-2 2 2-2 2 2" fill="none" stroke="#dfe7f2"/><path d="M1761 3h8M1808 7h7v-8" fill="none" stroke="#dfe7f2"/><path d="M1854 -1l8 8m0-8-8 8" stroke="#dfe7f2"/>
<path d="M1904 0h12v10h-12zM1907 5h6v5h-6z" fill="none" stroke="#fff" stroke-width="1.300"/>
<path d="M1934 2c3-3 9-2 10 1 1 4-2 7-7 7" fill="none" stroke="#7f9ac2" stroke-width="1.500"/>
<circle cx="1977" cy="4" r="5" fill="none" stroke="#7f9ac2" stroke-width="1.500"/>
<path d="M2004 -1h5M2004 3h5l-2.500 3z" fill="#fff"/>
<path d="M3635 -1v8h12v-8M3641 7v-7m-2 2 2-2 2 2" fill="none" stroke="#dfe7f2"/><path d="M3683 3h8M3729 7h7v-8" fill="none" stroke="#dfe7f2"/><path d="M3776 -1l8 8m0-8-8 8" stroke="#dfe7f2"/>
<use href="#bulb" x="569" y="26" width="12" height="18"/><use href="#bulb" x="2489" y="26" width="12" height="18"/>
<path d="M1814 41V34l4-4 3 2v9zM1817 36l4-3" fill="none" stroke="#fff"/><path d="M1859 35l3 3 3-3" fill="none" stroke="#fff"/>
<path d="M3735 41V34l4-4 3 2v9zM3738 36l4-3" fill="none" stroke="#fff"/><path d="M3780 35l3 3 3-3" fill="none" stroke="#fff"/>

<!-- clipboard -->
<use href="#cut" x="15" y="58" width="14" height="16" style="color:#555"/><use href="#cpy" x="15" y="81" width="14" height="16" style="color:#666"/><use href="#brs" x="14" y="104" width="16" height="18"/>
<use href="#paste" x="-22" y="60" width="28" height="30"/>
<use href="#cut" x="1935" y="58" width="14" height="16" style="color:#aaa"/><use href="#cpy" x="1935" y="81" width="14" height="16" style="color:#aaa"/><use href="#brs" x="1934" y="104" width="16" height="18"/>
<use href="#paste" x="1898" y="60" width="28" height="30"/><use href="#dn" x="1908" y="111" width="6" height="4"/>

<!-- shared ribbon icons -->
<use href="#ric"/>
<use href="#ric" x="1920"/>

<!-- gallery arrows / launchers -->
<path d="M1604 83h8M1605 87h6l-3 3z" fill="#444" stroke="#444" stroke-width=".7"/>
<path d="M3525 83h8M3526 87h6l-3 3z" fill="#444" stroke="#444" stroke-width=".7"/>
<use href="#lc" x="1619" y="133" width="8" height="8"/><use href="#lc" x="3540" y="133" width="8" height="8"/>
<!-- Edit icons -->
<use href="#mg" x="1643" y="59" width="14" height="14"/><use href="#mg" x="3564" y="59" width="14" height="14"/>
<path d="M1647 104v15l3-3 2 4 2-1-2-4h4z" fill="#fff" stroke="#555"/><path d="M3568 104v15l3-3 2 4 2-1-2-4h4z" fill="#fff" stroke="#555"/>
<use href="#dn" x="1700" y="64" width="6" height="4"/><use href="#dn" x="1689" y="110" width="6" height="4"/><use href="#dn" x="3622" y="64" width="6" height="4"/><use href="#dn" x="3611" y="110" width="6" height="4"/>
<circle cx="1752" cy="72" r="5" fill="#f58a1f"/><circle cx="3673" cy="72" r="5" fill="#c4c4c4"/>
<path d="M1863 139l4-3 4 3M3785 139l4-3 4 3" fill="none" stroke="#444"/>

<!-- nav icons -->
<path d="M239 165l6 6 6-6M282 163l10 10m0-10-10 10" fill="none" stroke="#444"/>
<path d="M2159 165l6 6 6-6M2202 163l10 10m0-10-10 10" fill="none" stroke="#444"/>
<use href="#mg" x="264" y="207" width="14" height="14"/><use href="#dn" x="282" y="214" width="6" height="4"/>
<use href="#mg" x="2184" y="207" width="14" height="14"/><use href="#dn" x="2203" y="214" width="6" height="4"/>
<path d="M2051 282h8M2055 285l-4 4h8z" fill="#444" stroke="#444"/>

<!-- crop marks -->
<g fill="none" stroke="#a8a8a8"><path d="M663 185.500h30v31M1512 185.500h-31v31M663 449.500h30v-31M1512 449.500h-31v-31"/></g>

<!-- QR -->
<g transform="translate(717.500 525) scale(3)">
<g fill="none" stroke="#000" stroke-width="1"><rect x=".5" y=".5" width="6" height="6"/><rect x="18.500" y=".5" width="6" height="6"/><rect x=".5" y="18.500" width="6" height="6"/></g>
<path d="M2 2h3v3H2zM20 2h3v3h-3zM2 20h3v3H2z"/>
<path stroke="#000" stroke-width="1" fill="none" d="M8 .5h2m1 0h1m2 0h2M9 1.500h1m2 0h2m2 0h1M8 2.500h1m1 0h3m1 0h1m1 0h1M8 3.500h2m2 0h1m2 0h2M9 4.500h3m1 0h1m1 0h1M8 5.500h1m1 0h1m2 0h2m1 0h1M8 6.500h1m1 0h1m1 0h1m1 0h1m1 0h1M10 7.500h1m1 0h2m2 0h2M0 8.500h2m1 0h1m2 0h3m1 0h1m2 0h3m1 0h2m2 0h1M1 9.500h2m1 0h2m3 0h1m3 0h2m2 0h1m1 0h3M0 10.500h1m2 0h3m1 0h2m2 0h2m2 0h1m1 0h2m2 0h2M2 11.500h2m2 0h1m3 0h2m3 0h3m1 0h1m1 0h2M0 12.500h3m2 0h2m2 0h1m1 0h1m5 0h2m2 0h3M1 13.500h1m2 0h1m2 0h3m1 0h1m4 0h1m2 0h2m1 0h1M0 14.500h2m2 0h3m2 0h1m2 0h2m2 0h3m1 0h2M2 15.500h1m2 0h2m1 0h2m2 0h1m2 0h2m1 0h1m2 0h2M0 16.500h1m2 0h3m3 0h2m2 0h1m2 0h3m1 0h3M1 17.500h2m2 0h1m3 0h1m1 0h3m1 0h2m1 0h1m1 0h2M8 18.500h2m1 0h2m1 0h1m2 0h2m1 0h3M9 19.500h1m2 0h3m2 0h1m2 0h2m1 0h1M8 20.500h3m2 0h1m1 0h2m2 0h1m1 0h2M9 21.500h1m1 0h2m2 0h1m2 0h3m1 0h2M8 22.500h1m2 0h1m1 0h3m1 0h2m2 0h1m1 0h1M10 23.500h3m2 0h1m1 0h1m1 0h2m1 0h2M8 24.500h2m2 0h2m1 0h2m2 0h1m2 0h2"/>
<rect x="11" y="11" width="3" height="3" fill="#fff"/><rect x="12" y="12" width="1.400" height="1.400" fill="#f3e6a8"/>
</g>

<!-- invoice double lines + seal -->
<path d="M939 569h275M939 573h275" stroke="#b06060" stroke-width="1.200" fill="none"/>
<ellipse cx="1087" cy="571" rx="54.500" ry="36.500" fill="none" stroke="#e2001a" stroke-width="3.500"/>
<ellipse cx="1087" cy="571" rx="50" ry="33" fill="none" stroke="#e2001a" stroke-width=".5"/>
<path id="arc1" d="M1043 577A45 29 0 0 1 1131 577" fill="none"/>
<path id="arc2" d="M1040 567A48 33 0 0 0 1134 567" fill="none"/>
<text font-family="Noto Serif CJK SC" font-size="7" fill="#d23030"><textPath href="#arc1" startOffset="50%" text-anchor="middle">全国统一发票监制章</textPath></text>
<text font-family="Noto Serif CJK SC" font-size="7" fill="#d23030"><textPath href="#arc2" startOffset="50%" text-anchor="middle">新疆维吾尔自治区税务局</textPath></text>
<text x="1087" y="575" text-anchor="middle" font-family="Noto Serif CJK SC" font-size="7" fill="#c04040">国家税务总局</text>

<!-- circled x -->
<circle cx="920" cy="952" r="7.700" fill="none" stroke="#222"/><path d="M914.500 946.500l11 11m0-11-11 11" stroke="#222"/>

<!-- status bar icons -->
<path d="M205 1011h5v11l-5-2zM214 1011h4v11h-4M212 1010v13" fill="none" stroke="#555"/><path d="M214 1013l3 4m0-4-3 4" stroke="#555"/>
<g fill="none" stroke="#666"><path d="M1722 1011h9M1722 1013h9M1722 1015h9M1722 1017h9M1722 1019h9M1722 1021h9M1768 1011h9M1768 1013h9M1768 1015h9M1768 1017h9M1768 1019h9M1768 1021h9M1802 1011h8v11h-8M1802 1014h5M1802 1017h5M1802 1020h5M3642 1011h9M3642 1013h9M3642 1015h9M3642 1017h9M3642 1019h9M3642 1021h9M3688 1011h9M3688 1013h9M3688 1015h9M3688 1017h9M3688 1019h9M3688 1021h9M3722 1011h8v11h-8M3722 1014h5M3722 1017h5M3722 1020h5"/></g>
<g fill="none" stroke="#333"><circle cx="438" cy="1011" r="1.500"/><path d="M433 1023l3-9h4l2 9"/><path d="M2290 1023l3-9h4l2 9"/><circle cx="2295" cy="1011" r="1.500"/></g>
<path d="M441 1018l5 5m0-5-5 5M2298 1018l5 5m0-5-5 5" stroke="#333"/>

<!-- taskbar -->
<use href="#tbar"/>
<use href="#tbar" x="1920"/>
<use href="#win" x="1897" y="1037" width="17" height="17"/>
</svg>

<!-- big red annotation on top -->
<div class="b" style="left:723px;top:440px;width:286px;height:114px;border:4px solid #d0121f"></div>
</body></html>
